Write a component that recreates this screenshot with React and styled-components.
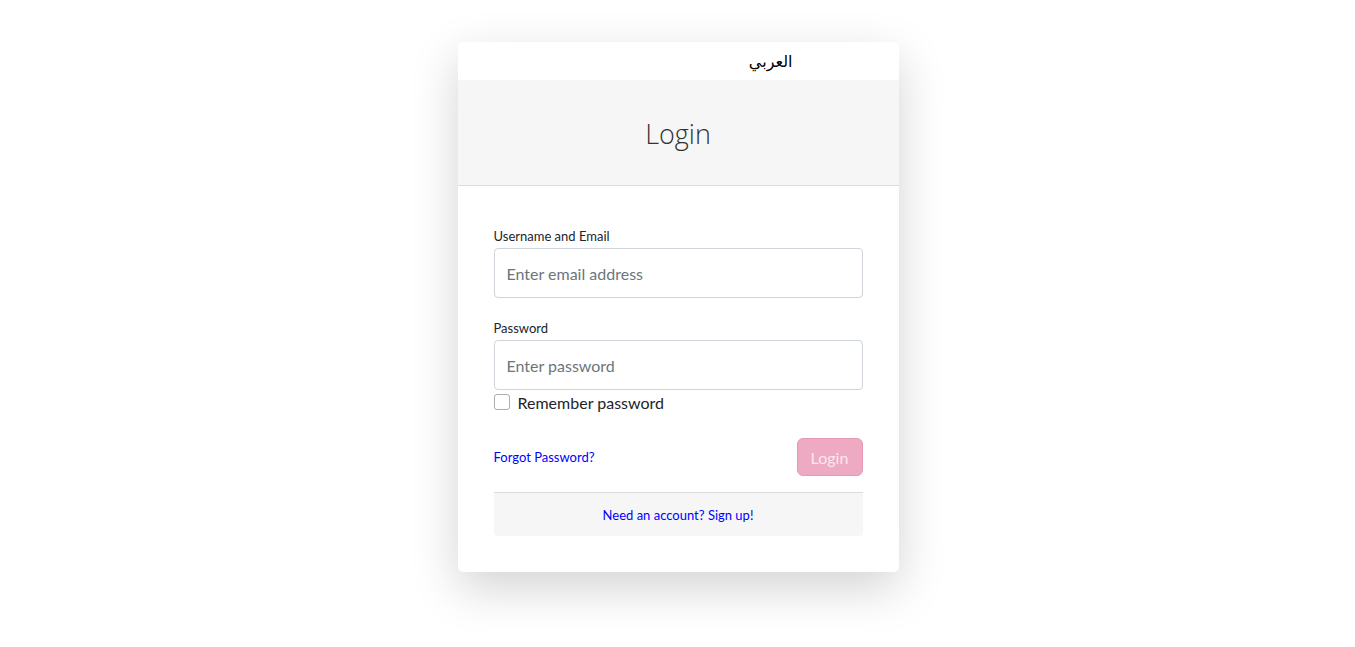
import React from "react";
import styled, { createGlobalStyle } from "styled-components";

const Global = createGlobalStyle`
  html, body { margin: 0; padding: 0; background: #fff; }
  body { font-family: "Lato", "Noto Sans", sans-serif; color: #212529; }
  * { box-sizing: border-box; }
`;

const Page = styled.div`
  min-height: 100vh;
  display: flex;
  justify-content: center;
  align-items: flex-start;
  padding: 42px 0 0 1px;
`;

const Card = styled.div`
  width: 441px;
  background: #fff;
  border-radius: 5px;
  box-shadow: 0 1rem 3rem rgba(0, 0, 0, 0.175);
  overflow: hidden;
`;

const LangBar = styled.div`
  height: 38px;
  display: flex;
  align-items: center;
  justify-content: flex-end;
  padding-right: 106px;
`;

const LangLink = styled.a`
  font-family: "DejaVu Sans", "Noto Sans", sans-serif;
  font-size: 16px;
  color: #000;
  text-decoration: none;
`;

const Header = styled.div`
  height: 106px;
  background: #f6f6f6;
  border-bottom: 1px solid #dcdcdc;
  display: flex;
  align-items: center;
  justify-content: center;
`;

const Title = styled.h1`
  margin: 0;
  font-family: "Open Sans", sans-serif;
  font-weight: 300;
  font-size: 27px;
  color: #333;
  padding-top: 2px;
`;

const Body = styled.div`
  padding: 42px 36px 36px;
  display: flex;
  flex-direction: column;
`;

const Field = styled.div`
  display: flex;
  flex-direction: column;
  margin-bottom: ${(p) => p.$mb || 0}px;
`;

const Label = styled.label`
  font-size: 13px;
  color: #212529;
  margin-bottom: 4px;
  line-height: 16px;
`;

const Input = styled.input`
  height: 50px;
  border: 1px solid #ced4da;
  border-radius: 4px;
  padding: 0 12px;
  font-family: inherit;
  font-size: 16px;
  color: #495057;
  outline: none;
  &::placeholder { color: #6c757d; }
`;

const CheckRow = styled.label`
  display: flex;
  align-items: center;
  gap: 8px;
  font-size: 16px;
  margin-top: 3px;
  height: 18px;
`;

const Box = styled.span`
  width: 16px;
  height: 16px;
  border: 1px solid #a8aeb4;
  border-radius: 3px;
  background: #fff;
`;

const ActionRow = styled.div`
  display: flex;
  justify-content: space-between;
  align-items: center;
  margin-top: 27px;
  padding-bottom: 16px;
  border-bottom: 1px solid #dcdcdc;
`;

const SmallLink = styled.a`
  font-size: 13px;
  color: #0000ff;
  text-decoration: none;
`;

const Button = styled.button`
  width: 66px;
  height: 38px;
  border-radius: 6px;
  border: 1px solid #e89ab5;
  background: #eeaac3;
  color: #fbe6ee;
  font-family: inherit;
  font-size: 16px;
  padding: 0;
`;

const Footer = styled.div`
  height: 43px;
  background: #f6f6f6;
  border-radius: 0 0 4px 4px;
  display: flex;
  align-items: center;
  justify-content: center;
`;

export default function App() {
  return (
    <>
      <Global />
      <Page>
        <Card>
          <LangBar>
            <LangLink href="#">العربي</LangLink>
          </LangBar>
          <Header>
            <Title>Login</Title>
          </Header>
          <Body>
            <Field $mb={22}>
              <Label>Username and Email</Label>
              <Input placeholder="Enter email address" />
            </Field>
            <Field>
              <Label>Password</Label>
              <Input type="password" placeholder="Enter password" />
            </Field>
            <CheckRow>
              <Box />
              Remember password
            </CheckRow>
            <ActionRow>
              <SmallLink href="#">Forgot Password?</SmallLink>
              <Button disabled>Login</Button>
            </ActionRow>
            <Footer>
              <SmallLink href="#">Need an account? Sign up!</SmallLink>
            </Footer>
          </Body>
        </Card>
      </Page>
    </>
  );
}
